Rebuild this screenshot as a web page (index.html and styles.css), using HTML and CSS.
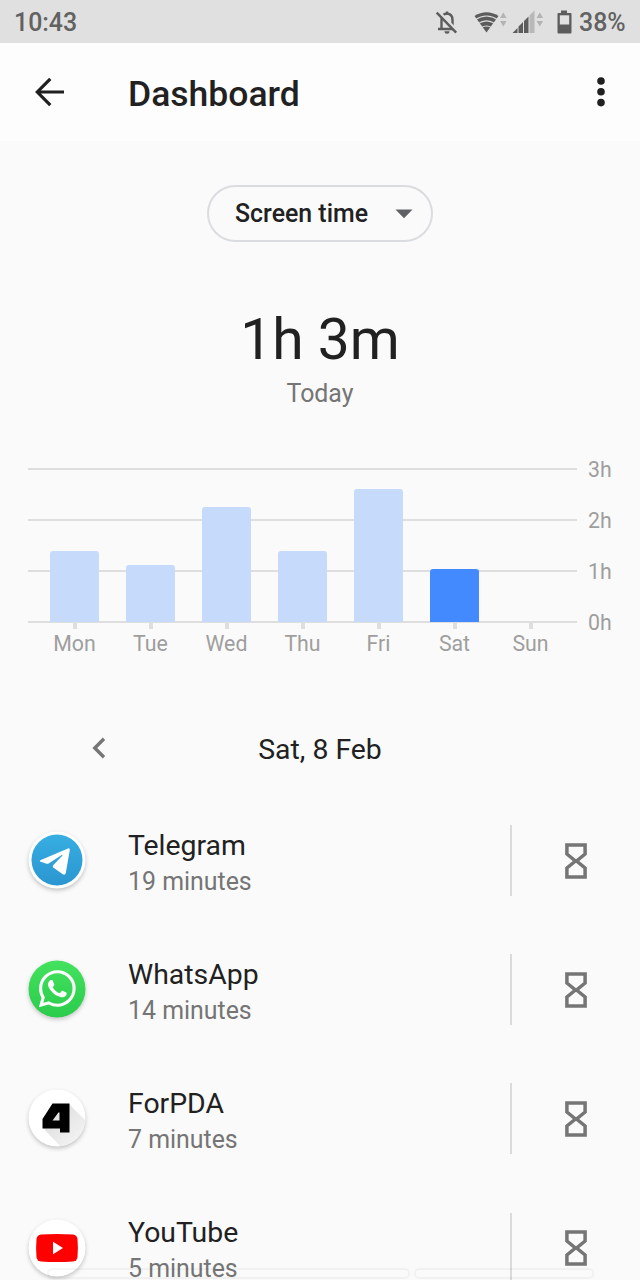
FILE: index.html
```
<!DOCTYPE html>
<html lang="en">
<head>
    <meta charset="UTF-8">
    <meta name="viewport" content="width=device-width, initial-scale=1.0">
    <title>Dashboard</title>
    <link rel="stylesheet" href="styles.css">
</head>
<body>
    <svg class="defs" width="0" height="0">
        <symbol id="hourglass" viewBox="0 0 24 36">
            <path d="M2.900 2h18.200v9L12.600 18l8.500 7v9H2.900v-9L11.400 18 2.900 11z" fill="none" stroke="#757575" stroke-width="3.500"/>
        </symbol>
    </svg>

    <div class="status-bar">
        <span class="clock">10:43</span>
        <svg class="status-icons" width="162" height="42" viewBox="0 0 162 42">
            <!-- notifications off -->
            <path d="M14.500 27V19q0-6 5.500-6.500 5.500.5 5.500 6.500v8" fill="none" stroke="#5c5c5c" stroke-width="2.400"/>
            <path d="M11 28h18M20 13v-2.500" stroke="#5c5c5c" stroke-width="2.400"/>
            <path d="M17.500 30.300h5a2.500 2.500 0 0 1-5 0z" fill="#5c5c5c"/>
            <path d="M11.500 10.500l19 20" stroke="#e0e0e0" stroke-width="3"/>
            <path d="M9.700 11.700l19.500 20" stroke="#5c5c5c" stroke-width="2.400"/>
            <!-- wifi -->
            <path d="M47.500 15Q59.500 7.500 71.500 15L59.500 31.500z" fill="#5c5c5c"/>
            <path d="M48 18.700q11.500-7.500 23 0M51 22.600q8.500-5.500 17 0M54.500 26.500q5-3 10 0" fill="none" stroke="#e0e0e0" stroke-width="1.100"/>
            <path d="M73 17l3.300-5.500 3.300 5.500zM73 20h6.600l-3.300 5.500z" fill="#b3b3b3"/>
            <!-- mobile signal -->
            <path d="M85.500 32l5-5v5zM91.500 32v-6.500l4.500-4.500V32zM97 32V20l4.500-4.500V32z" fill="#5c5c5c"/>
            <path d="M102.500 32V14.500l5-5V32z" fill="#b8b8b8"/>
            <path d="M109.500 17l3.300-5.500 3.300 5.500zM109.500 20h6.600l-3.300 5.500z" fill="#b3b3b3"/>
            <!-- battery -->
            <path d="M134 9.500h6V12h3.500q1 0 1 1v18.500q0 1-1 1h-12q-1 0-1-1V13q0-1 1-1h2.500z" fill="#5c5c5c"/>
            <path d="M132.800 14.300h9.400v9.200h-9.400z" fill="#e0e0e0"/>
        </svg>
        <span class="battery">38%</span>
    </div>

    <header class="toolbar">
        <svg class="back" width="30" height="30" viewBox="0 0 30 30">
            <path d="M29 15H3M15.300 1.800L2.300 15l13 13.200" fill="none" stroke="#202020" stroke-width="3.200"/>
        </svg>
        <h1>Dashboard</h1>
        <svg class="more" width="10" height="30" viewBox="0 0 10 30">
            <circle cx="5" cy="4" r="3.800"/>
            <circle cx="5" cy="14.800" r="3.800"/>
            <circle cx="5" cy="25.600" r="3.800"/>
        </svg>
    </header>

    <main>
        <button class="selector">
            <span>Screen time</span>
            <svg width="18" height="10" viewBox="0 0 18 10"><path d="M.5.500h17L9 9.300z" fill="#5f6064"/></svg>
        </button>

        <div class="total">1h 3m</div>
        <div class="total-label">Today</div>

        <div class="chart">
            <div class="grid">
                <div class="line"></div>
                <div class="line"></div>
                <div class="line"></div>
                <div class="line"></div>
            </div>
            <div class="bars">
                <div class="bar" style="height: 71.500px"></div>
                <div class="bar" style="height: 57px"></div>
                <div class="bar" style="height: 115px"></div>
                <div class="bar" style="height: 71px"></div>
                <div class="bar" style="height: 133px"></div>
                <div class="bar active" style="height: 53px"></div>
                <div class="bar" style="height: 0"></div>
            </div>
            <div class="hours">
                <span>3h</span>
                <span>2h</span>
                <span>1h</span>
                <span>0h</span>
            </div>
            <div class="days">
                <span>Mon</span>
                <span>Tue</span>
                <span>Wed</span>
                <span>Thu</span>
                <span>Fri</span>
                <span>Sat</span>
                <span>Sun</span>
            </div>
        </div>

        <div class="date-nav">
            <svg width="14" height="22" viewBox="0 0 14 22">
                <path d="M12 1.800L2.800 11l9.200 9.200" fill="none" stroke="#757575" stroke-width="3.400"/>
            </svg>
            <span class="date">Sat, 8 Feb</span>
        </div>

        <ul class="apps">
            <li class="app">
                <svg class="app-icon" width="58" height="58" viewBox="0 0 58 58">
                    <defs>
                        <linearGradient id="tg" x1="0" y1="0" x2="0" y2="1">
                            <stop offset="0" stop-color="#37aee2"/>
                            <stop offset="1" stop-color="#2b96d1"/>
                        </linearGradient>
                    </defs>
                    <circle cx="29" cy="29" r="28.500" fill="#fff"/>
                    <circle cx="29" cy="29" r="25.500" fill="url(#tg)"/>
                    <path d="M12.300 29.300L40 17.500q2-.7 1.800 1.500l-4 23q-.6 2.700-3 1.300l-9.600-6.800q-1-1 0-2.200l9.300-9.800q.4-.9-.8-.4L20.600 32.500q-.9.600-2 .2l-6-2q-1.700-.6-.3-1.400z" fill="#fff"/>
                </svg>
                <div class="info">
                    <div class="name">Telegram</div>
                    <div class="time">19 minutes</div>
                </div>
                <div class="timer"><svg width="24" height="36"><use href="#hourglass"/></svg></div>
            </li>
            <li class="app">
                <svg class="app-icon" width="58" height="58" viewBox="0 0 58 58">
                    <defs>
                        <linearGradient id="wa" x1="0" y1="0" x2="0" y2="1">
                            <stop offset="0" stop-color="#43e25e"/>
                            <stop offset="1" stop-color="#2bcb4c"/>
                        </linearGradient>
                    </defs>
                    <circle cx="29" cy="29" r="28.500" fill="url(#wa)"/>
                    <path transform="translate(10.800 10.200) scale(1.540)" fill="#fff" d="M17.472 14.382c-.297-.149-1.758-.867-2.030-.967-.273-.099-.471-.148-.67.150-.197.297-.767.966-.940 1.164-.173.199-.347.223-.644.075-.297-.150-1.255-.463-2.390-1.475-.883-.788-1.480-1.761-1.653-2.059-.173-.297-.018-.458.130-.606.134-.133.298-.347.446-.520.149-.174.198-.298.298-.497.099-.198.050-.371-.025-.520-.075-.149-.669-1.612-.916-2.207-.242-.579-.487-.5-.669-.510-.173-.008-.371-.010-.570-.010-.198 0-.520.074-.792.372-.272.297-1.040 1.016-1.040 2.479 0 1.462 1.065 2.875 1.213 3.074.149.198 2.096 3.200 5.077 4.487.709.306 1.262.489 1.694.625.712.227 1.360.195 1.871.118.571-.085 1.758-.719 2.006-1.413.248-.694.248-1.289.173-1.414-.074-.124-.272-.198-.570-.347m-5.421 7.403h-.004a9.870 9.870 0 01-5.031-1.378l-.361-.214-3.741.982.998-3.648-.235-.374a9.860 9.860 0 01-1.510-5.260c.001-5.450 4.436-9.884 9.888-9.884 2.640 0 5.122 1.030 6.988 2.898a9.825 9.825 0 012.893 6.994c-.003 5.450-4.437 9.884-9.885 9.884m8.413-18.297A11.815 11.815 0 0012.050 0C5.495 0 .16 5.335.157 11.892c0 2.096.547 4.142 1.588 5.945L.057 24l6.305-1.654a11.882 11.882 0 005.683 1.448h.005c6.554 0 11.890-5.335 11.893-11.893a11.821 11.821 0 00-3.480-8.413Z"/>
                </svg>
                <div class="info">
                    <div class="name">WhatsApp</div>
                    <div class="time">14 minutes</div>
                </div>
                <div class="timer"><svg width="24" height="36"><use href="#hourglass"/></svg></div>
            </li>
            <li class="app">
                <svg class="app-icon" width="58" height="58" viewBox="0 0 58 58">
                    <defs>
                        <clipPath id="disc"><circle cx="29" cy="29" r="28.500"/></clipPath>
                        <linearGradient id="shade" x1="0" y1="0" x2="1" y2="1">
                            <stop offset="0.200" stop-color="#dedede"/>
                            <stop offset="0.800" stop-color="#f4f4f4"/>
                        </linearGradient>
                    </defs>
                    <circle cx="29" cy="29" r="28.500" fill="#fff"/>
                    <path d="M41 15l22 22v24H36L15 39z" fill="url(#shade)" clip-path="url(#disc)"/>
                    <!-- logo mark -->
                    <path d="M24.500 14.500H41.500V43.500H32V39.500H14.500V30zM30.500 23.500L24.500 31.500H31.500V23.500z" fill="#000" fill-rule="evenodd"/>
                </svg>
                <div class="info">
                    <div class="name">ForPDA</div>
                    <div class="time">7 minutes</div>
                </div>
                <div class="timer"><svg width="24" height="36"><use href="#hourglass"/></svg></div>
            </li>
            <li class="app">
                <svg class="app-icon" width="58" height="58" viewBox="0 0 58 58">
                    <circle cx="29" cy="29" r="28.500" fill="#fff"/>
                    <path d="M13 15.500Q29 14.300 45 15.500 49 16 49.500 20 50.300 29 49.500 38 49 42 45 42.500 29 43.700 13 42.500 9 42 8.500 38 7.700 29 8.500 20 9 16 13 15.500z" fill="#f00"/>
                    <path d="M25 22.800L35 29l-10 6.200z" fill="#fff"/>
                </svg>
                <div class="info">
                    <div class="name">YouTube</div>
                    <div class="time">5 minutes</div>
                </div>
                <div class="timer"><svg width="24" height="36"><use href="#hourglass"/></svg></div>
            </li>
        </ul>
    </main>

    <div class="bottom-outline">
        <div class="outline-wide"></div>
        <div class="outline-narrow"></div>
    </div>
</body>
</html>
```
FILE: styles.css
```
* {
    box-sizing: border-box;
}
body {
    font-family: Roboto, sans-serif;
    background-color: #fafafa;
    color: #212121;
    margin: 0;
    width: 640px;
    height: 1280px;
    overflow: hidden;
    position: relative;
}
.defs {
    display: block;
}
.status-bar {
    display: flex;
    align-items: center;
    height: 43px;
    padding: 2px 14px 0 14px;
    background: #e0e0e0;
    color: #626262;
    font-size: 24.9px;
    font-weight: 500;
}
.status-icons {
    margin: -2px 0 0 auto;
}
.battery {
    width: 47px;
    margin-left: -10px;
}
.toolbar {
    display: flex;
    align-items: center;
    height: 98px;
    padding: 0 34px 0 35px;
    background: #fdfdfd;
}
.toolbar h1 {
    margin: 4px 0 0 63px;
    font-size: 35.5px;
    font-weight: 500;
}
.more {
    margin-left: auto;
    fill: #202020;
}
main {
    display: flex;
    flex-direction: column;
    padding-top: 44px;
}
.selector {
    display: flex;
    align-items: center;
    justify-content: space-between;
    align-self: center;
    width: 226px;
    height: 57px;
    padding: 0 18px 0 26px;
    border: 2px solid #dadce0;
    border-radius: 29px;
    background: none;
    color: #212121;
    font-family: inherit;
    font-size: 24.9px;
    font-weight: 500;
}
.total {
    margin-top: 63px;
    font-size: 57px;
    line-height: 70px;
    text-align: center;
}
.total-label {
    margin-top: 4px;
    color: #757575;
    font-size: 24.9px;
    line-height: 30px;
    text-align: center;
}
.chart {
    display: grid;
    grid-template-columns: 549px 1fr;
    grid-template-rows: 155px auto;
    margin: 59px 28px 0 28px;
    color: #9e9e9e;
    font-size: 21.3px;
}
.grid {
    grid-area: 1 / 1;
    display: flex;
    flex-direction: column;
    justify-content: space-between;
}
.line {
    height: 2px;
    background: #dedede;
}
.bars {
    grid-area: 1 / 1;
    display: flex;
    align-items: flex-end;
    gap: 27px;
    padding: 0 22px 1px;
}
.bar {
    width: 49px;
    background: #c6dafc;
    border-radius: 3px 3px 0 0;
}
.bar.active {
    background: #4389ff;
}
.hours {
    grid-area: 1 / 2;
    display: flex;
    flex-direction: column;
    justify-content: space-between;
    margin: -10px 0 -12px;
    padding-left: 11px;
    line-height: 24px;
}
.days {
    grid-area: 2 / 1;
    display: flex;
    gap: 27px;
    padding: 0 22px;
    line-height: 30px;
}
.days span {
    width: 49px;
    display: flex;
    flex-direction: column;
    align-items: center;
}
.days span::before {
    content: "";
    width: 4px;
    height: 6px;
    background: #dedede;
}
.date-nav {
    display: grid;
    grid-template-columns: 92px 1fr 92px;
    align-items: center;
    height: 40px;
    margin-top: 70px;
}
.date-nav svg {
    justify-self: end;
    margin-top: -3px;
    margin-right: -14px;
}
.date {
    font-size: 28.4px;
    text-align: center;
}
.apps {
    list-style: none;
    margin: 27px 0 0;
    padding: 0;
}
.app {
    display: flex;
    align-items: center;
    height: 129.2px;
    padding-left: 28px;
}
.app-icon {
    margin-top: -1px;
    border-radius: 50%;
    filter: drop-shadow(0 2px 2px rgba(0, 0, 0, 0.22));
}
.info {
    flex: 1;
    margin-left: 42px;
    padding-top: 6px;
    line-height: 36px;
}
.name {
    font-size: 28.4px;
}
.time {
    color: #757575;
    font-size: 24.9px;
}
.timer {
    display: flex;
    align-items: center;
    justify-content: center;
    width: 130px;
    height: 71px;
    border-left: 2px solid #dadada;
}
.bottom-outline {
    position: absolute;
    left: 47px;
    bottom: 1px;
    display: flex;
    gap: 4px;
}
.outline-wide,
.outline-narrow {
    height: 11px;
    border: 2px solid rgba(0, 0, 0, 0.035);
    border-radius: 5px;
}
.outline-wide {
    width: 363px;
}
.outline-narrow {
    width: 180px;
}
```
